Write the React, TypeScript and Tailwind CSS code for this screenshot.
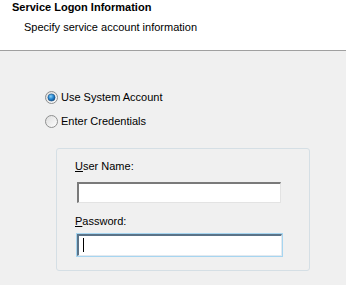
import React from "react";

function Radio({ checked }: { checked?: boolean }) {
  return (
    <svg width="13" height="13" viewBox="0 0 13 13" className="shrink-0">
      <defs>
        <linearGradient id="rb" x1="0" y1="0" x2="1" y2="1">
          <stop offset="0" stopColor="#dcdcdc" />
          <stop offset="1" stopColor="#ffffff" />
        </linearGradient>
        <radialGradient id="rd" cx="0.4" cy="0.35" r="0.7">
          <stop offset="0" stopColor="#8fd3f7" />
          <stop offset="0.5" stopColor="#2a8ad4" />
          <stop offset="1" stopColor="#0b4a8a" />
        </radialGradient>
      </defs>
      <circle cx="6.5" cy="6.5" r="6" fill="url(#rb)" stroke="#8e8f8f" strokeWidth="1" />
      {checked && <circle cx="6.5" cy="6.5" r="3.6" fill="url(#rd)" stroke="#1c5180" strokeWidth="0.6" />}
    </svg>
  );
}

export default function App() {
  return (
    <div className="w-[346px] h-[285px] overflow-hidden bg-[#f0f0f0] text-[11px] leading-[13px] text-black font-['Liberation_Sans',Arial,sans-serif]">
      {/* Header */}
      <div className="h-[51px] bg-white border-b border-[#a0a0a0] pt-[1px]">
        <div className="pl-[12px] font-bold">Service Logon Information</div>
        <div className="pl-[24px] mt-[7px]">Specify service account information</div>
      </div>

      {/* Account type */}
      <div className="pl-[45px] pt-[40px] flex flex-col gap-[11px]">
        <label className="flex items-center gap-[3px]">
          <Radio checked />
          <span>Use System Account</span>
        </label>
        <label className="flex items-center gap-[3px]">
          <Radio />
          <span>Enter Credentials</span>
        </label>
      </div>

      {/* Credentials group */}
      <div className="ml-[56px] mt-[20px] w-[254px] h-[123px] border border-[#d5dfe5] rounded-[3px] pl-[18px] pt-[11px]">
        <div>
          <span className="underline">U</span>ser Name:
        </div>
        <div className="mt-[9px] ml-[2px] w-[204px] h-[21px] bg-white border-t-2 border-l-2 border-t-[#7a7a7a] border-l-[#7a7a7a] border-b border-r border-b-[#e3e3e3] border-r-[#e3e3e3]" />
        <div className="mt-[12px]">
          <span className="underline">P</span>assword:
        </div>
        <div className="mt-[5px] ml-[1px] w-[207px] h-[24px] bg-white border border-[#a6d5f0]">
          <div className="h-full bg-white border-t-2 border-l-2 border-t-[#5b7388] border-l-[#5b7388] border-b border-r border-b-[#e3e9ef] border-r-[#e3e9ef] pl-[4px] pt-[2px]">
            <div className="w-[1px] h-[14px] bg-black" />
          </div>
        </div>
      </div>
    </div>
  );
}
